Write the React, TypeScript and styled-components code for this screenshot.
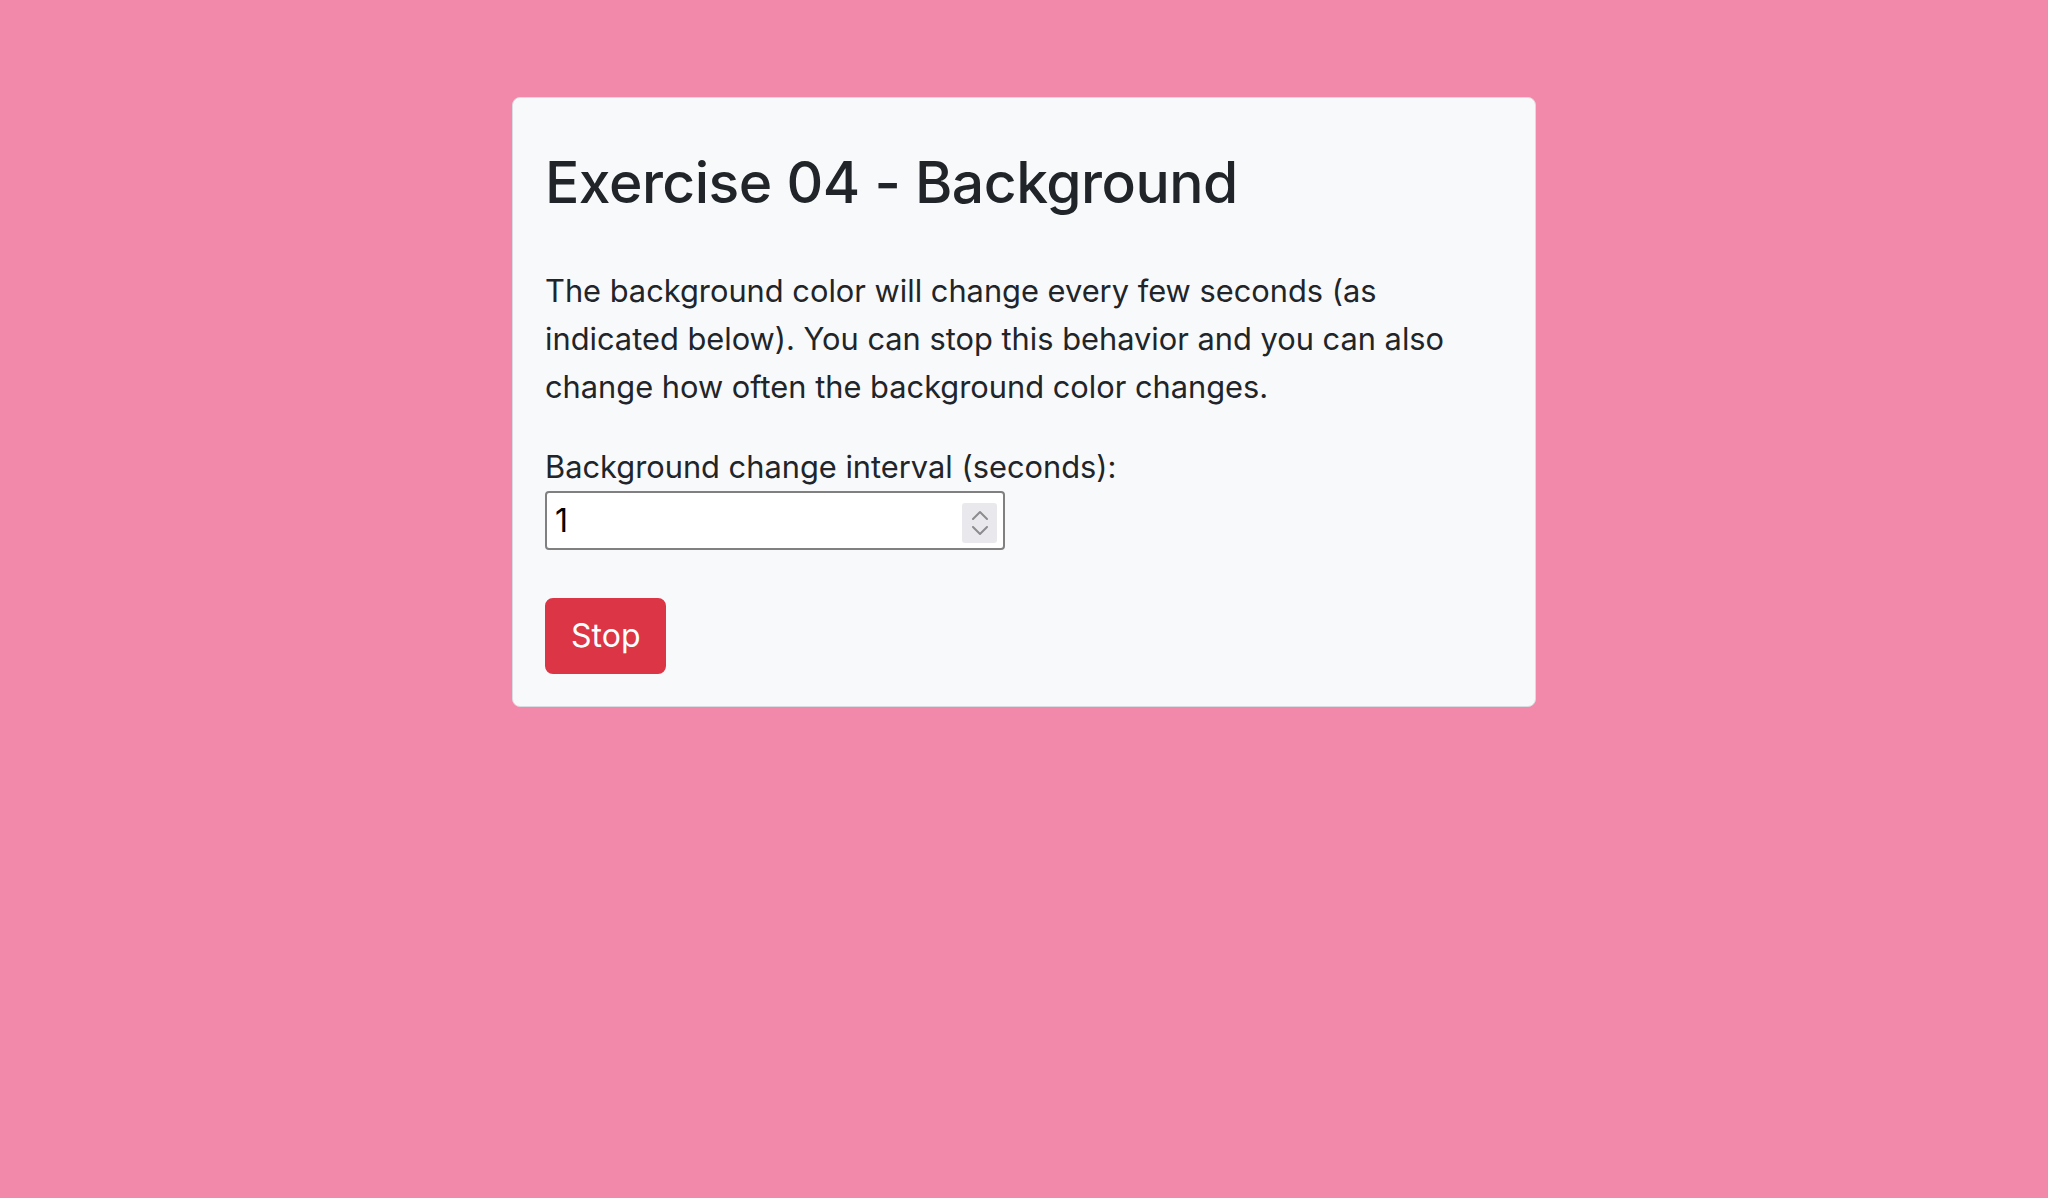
import React, { useState } from "react";
import styled, { createGlobalStyle } from "styled-components";

const GlobalStyle = createGlobalStyle`
  html, body {
    margin: 0;
    padding: 0;
    background: #f288aa;
    min-height: 100%;
  }
  body {
    font-family: Inter, "Noto Sans", "Liberation Sans", sans-serif;
    color: #212529;
  }
  * { box-sizing: border-box; }
`;

const Page = styled.div`
  min-height: 1198px;
  padding-top: 97px;
`;

const Card = styled.main`
  width: 1024px;
  margin: 0 auto;
  background: #f8f9fa;
  border: 1px solid #d9dce0;
  border-radius: 8px;
  padding: 32px 32px 32px;
`;

const Title = styled.h1`
  margin: 19px 0 50px;
  font-size: 57px;
  font-weight: 500;
  line-height: 1.2;
  letter-spacing: -0.5px;
`;

const Text = styled.p`
  margin: 0 0 32px;
  font-size: 30.8px;
  line-height: 48px;
  font-weight: 400;
`;

const Label = styled.label`
  display: block;
  font-size: 30.8px;
  line-height: 48px;
`;

const InputWrap = styled.div`
  position: relative;
  width: 460px;
  height: 59px;
  margin-bottom: 48px;
`;

const NumberInput = styled.input`
  width: 100%;
  height: 100%;
  border: 2px solid #808080;
  border-radius: 4px;
  background: #fff;
  padding: 0 60px 0 8px;
  font-family: Inter, "Liberation Sans", sans-serif;
  font-size: 32px;
  color: #000;
  outline: none;
  -moz-appearance: textfield;
  &::-webkit-inner-spin-button,
  &::-webkit-outer-spin-button {
    -webkit-appearance: none;
    margin: 0;
  }
`;

const Spinner = styled.div`
  position: absolute;
  top: 12px;
  right: 8px;
  width: 35px;
  height: 40px;
  background: #e9e9ed;
  border-radius: 3px;
  display: flex;
  flex-direction: column;
  align-items: center;
  justify-content: center;
  gap: 6px;
  pointer-events: none;
`;

const StopButton = styled.button`
  display: block;
  height: 76px;
  padding: 0 24px;
  font-family: Inter, "Liberation Sans", sans-serif;
  font-size: 32px;
  line-height: 48px;
  color: #fff;
  background: #dc3545;
  border: 2px solid #dc3545;
  border-radius: 8px;
  cursor: pointer;
`;

const Chevron = ({ up }: { up?: boolean }) => (
  <svg width="18" height="10" viewBox="0 0 18 10" aria-hidden="true">
    <path
      d={up ? "M2 9 L9 2 L16 9" : "M2 1 L9 8 L16 1"}
      fill="none"
      stroke="#8c8c90"
      strokeWidth="2"
      strokeLinecap="round"
      strokeLinejoin="round"
    />
  </svg>
);

export default function App() {
  const [value, setValue] = useState("1");
  return (
    <Page>
      <GlobalStyle />
      <Card>
        <Title>Exercise 04 - Background</Title>
        <Text>
          The background color will change every few seconds (as indicated
          below). You can stop this behavior and you can also change how often
          the background color changes.
        </Text>
        <Label htmlFor="interval">Background change interval (seconds):</Label>
        <InputWrap>
          <NumberInput
            id="interval"
            type="number"
            value={value}
            onChange={(e) => setValue(e.target.value)}
          />
          <Spinner>
            <Chevron up />
            <Chevron />
          </Spinner>
        </InputWrap>
        <StopButton type="button">Stop</StopButton>
      </Card>
    </Page>
  );
}
